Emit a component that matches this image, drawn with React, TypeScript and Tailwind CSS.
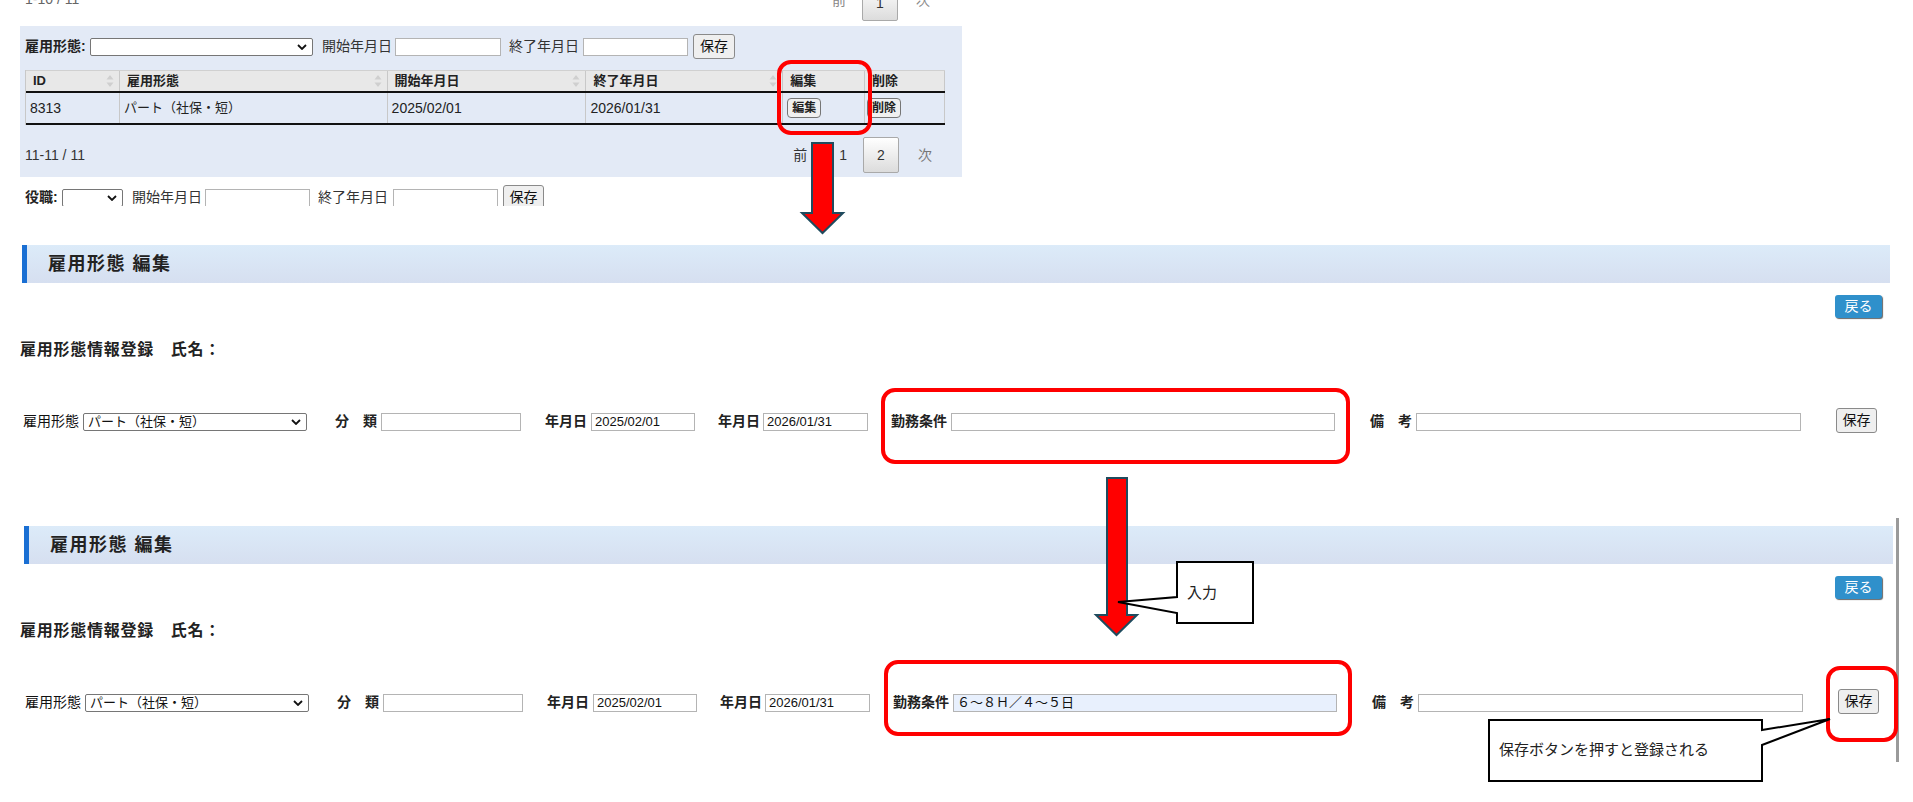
import React from 'react';

const FONT = "font-['Liberation_Sans','Noto_Sans_CJK_JP',sans-serif]";

function Chevron() {
  return (
    <svg width="10" height="6" viewBox="0 0 10 6" className="shrink-0">
      <path d="M1 1l4 4 4-4" fill="none" stroke="#111" strokeWidth="1.8" />
    </svg>
  );
}

function SortIcon() {
  return (
    <svg width="8" height="14" viewBox="0 0 8 14" className="shrink-0">
      <path d="M4 1 L7.5 5.5 H0.5 Z" fill="#cfcfcf" />
      <path d="M4 13 L7.5 8.5 H0.5 Z" fill="#cfcfcf" />
    </svg>
  );
}

function SelectBox({ value = '', className = '' }: { value?: string; className?: string }) {
  return (
    <div
      className={`flex h-[18px] shrink-0 items-center justify-between rounded-[2px] border border-[#767676] bg-white pl-[4px] pr-[5px] text-[13px] leading-none text-[#111] ${className}`}
    >
      <span className="whitespace-nowrap">{value}</span>
      <Chevron />
    </div>
  );
}

function TextBox({ value = '', className = '' }: { value?: string; className?: string }) {
  return (
    <input
      readOnly
      value={value}
      className={`h-[18px] shrink-0 border border-[#b4b4b4] px-[3px] text-[13px] text-[#111] outline-none ${className}`}
    />
  );
}

function GrayButton({ label, className = '' }: { label: string; className?: string }) {
  return (
    <button
      className={`h-[25px] shrink-0 rounded-[3px] border border-[#8a8a8a] bg-[#efefef] text-[14px] text-[#111] ${className}`}
    >
      {label}
    </button>
  );
}

function HeadCell({ label, className, sort }: { label: string; className: string; sort?: boolean }) {
  return (
    <div className={`flex h-full items-center justify-between border-r border-[#c8c8c8] pl-[7px] pr-[5px] ${className}`}>
      <span>{label}</span>
      {sort && <SortIcon />}
    </div>
  );
}

function Pager({ before, active, after }: { before: string; active: string; after: string }) {
  return (
    <div className="ml-auto flex items-center text-[14px] text-[#333]">
      <span>{before}</span>
      <span className="ml-[32px]">{after}</span>
      <button className="ml-[16px] h-[36px] w-[36px] rounded-[2px] border border-[#a9a9a9] bg-linear-to-b from-white to-[#dcdcdc] text-[14px] text-[#333]">
        {active}
      </button>
      <span className="ml-[19px] text-[#777]">次</span>
    </div>
  );
}

function EditSection({
  bandClass,
  formClass,
  work = '',
  workClass = 'bg-white',
}: {
  bandClass: string;
  formClass: string;
  work?: string;
  workClass?: string;
}) {
  return (
    <section>
      <div
        className={`flex h-[38px] items-center border-l-[5px] border-[#1a6fd3] bg-linear-to-b from-[#dcebf9] to-[#d6dff0] pl-[21px] ${bandClass}`}
      >
        <h2 className="text-[18px] font-bold tracking-[1.5px] text-[#222]">雇用形態 編集</h2>
      </div>

      <div className="mt-[12px] flex w-[1882px] justify-end">
        <button className="h-[23px] w-[47px] rounded-[3px] bg-[#2f90cb] text-[14px] text-white shadow-[1px_1px_1px_rgba(0,0,0,0.6)]">
          戻る
        </button>
      </div>

      <div className="ml-[20px] mt-[20px] h-[24px] text-[16px] font-bold leading-[24px] tracking-[0.75px] text-[#222]">
        雇用形態情報登録　氏名：
      </div>

      <div className={`mt-[46px] flex h-[25px] items-end text-[14px] text-[#222] ${formClass}`}>
        <div className="mb-[1px] flex items-center">
          <span className="w-[56px] whitespace-nowrap text-[#111]">雇用形態</span>
          <SelectBox value="パート（社保・短）" className="ml-[4px] w-[224px]" />
        </div>
        <div className="mb-[1px] ml-[28px] flex items-center">
          <span className="w-[42px] whitespace-nowrap font-bold">分　類</span>
          <TextBox className="ml-[4px] w-[140px] bg-white" />
        </div>
        <div className="mb-[1px] ml-[24px] flex items-center">
          <span className="w-[42px] whitespace-nowrap font-bold">年月日</span>
          <TextBox value="2025/02/01" className="ml-[4px] w-[104px] bg-white" />
        </div>
        <div className="mb-[1px] ml-[23px] flex items-center">
          <span className="w-[42px] whitespace-nowrap font-bold">年月日</span>
          <TextBox value="2026/01/31" className="ml-[3px] w-[105px] bg-white" />
        </div>
        <div className="mb-[1px] ml-[23px] flex items-center">
          <span className="w-[56px] whitespace-nowrap font-bold">勤務条件</span>
          <TextBox value={work} className={`ml-[4px] w-[384px] ${workClass}`} />
        </div>
        <div className="mb-[1px] ml-[35px] flex items-center">
          <span className="w-[42px] whitespace-nowrap font-bold">備　考</span>
          <TextBox className="ml-[4px] w-[385px] bg-white" />
        </div>
        <GrayButton label="保存" className="ml-[35px] w-[41px]" />
      </div>
    </section>
  );
}

function Annotations() {
  const red = { fill: 'none', stroke: '#ff0000', strokeWidth: 4 };
  const arrow = { fill: '#ff0000', stroke: '#1f4b5e', strokeWidth: 2 };
  return (
    <>
      <svg className="pointer-events-none absolute left-0 top-0" width="1913" height="802" viewBox="0 0 1913 802">
        <rect x="1896" y="518" width="3" height="244" fill="#9a9a9a" />
        <rect x="779" y="62" width="91" height="71" rx="12" {...red} />
        <polygon points="812,143 833,143 833,213 843,213 822.5,233 802,213 812,213" {...arrow} />
        <rect x="883" y="390" width="465" height="72" rx="12" {...red} />
        <polygon points="1107,478 1127,478 1127,615 1137,615 1116.5,635 1096,615 1107,615" {...arrow} />
        <path d="M1177,597 L1177,562 L1253,562 L1253,623 L1177,623 L1177,613 L1118,602 Z" fill="#fff" stroke="#000" strokeWidth="2" />
        <rect x="886" y="662" width="464" height="72" rx="12" {...red} />
        <rect x="1828" y="668" width="68" height="72" rx="12" {...red} />
        <path d="M1762,730 L1830,719 L1762,745 L1762,781 L1489,781 L1489,720 L1762,720 Z" fill="#fff" stroke="#000" strokeWidth="2" />
      </svg>
      <div className="pointer-events-none absolute left-[1187px] top-[582px] text-[15px] leading-[22px] text-[#222]">入力</div>
      <div className="pointer-events-none absolute left-[1499px] top-[739px] whitespace-nowrap text-[15px] leading-[22px] text-[#222]">
        保存ボタンを押すと登録される
      </div>
    </>
  );
}

export default function App() {
  return (
    <div className={`relative h-[802px] w-[1913px] overflow-hidden bg-white ${FONT}`}>
      {/* bottom edge of the previous pager, cut off by the screenshot */}
      <div className="h-[26px] overflow-hidden">
        <div className="mt-[-15px] flex h-[36px] w-[962px] items-center pl-[25px] pr-[32px] text-[14px] text-[#666]">
          <span className="mb-[8px]">1-10 / 11</span>
          <div className="ml-auto flex items-center text-[14px] text-[#888]">
            <span className="mb-[6px]">前</span>
            <button className="ml-[16px] h-[36px] w-[36px] rounded-[2px] border border-[#a9a9a9] bg-linear-to-b from-white to-[#dcdcdc] text-[#333]">
              1
            </button>
            <span className="mb-[6px] ml-[18px]">次</span>
          </div>
        </div>
      </div>

      {/* list panel */}
      <div className="ml-[20px] flex h-[151px] w-[942px] flex-col bg-[#e3eaf6] pl-[5px] pt-[8px]">
        <div className="flex h-[25px] items-center text-[14px] text-[#333]">
          <span className="w-[60px] whitespace-nowrap font-bold text-[#222]">雇用形態:</span>
          <SelectBox className="ml-[5px] w-[223px]" />
          <span className="ml-[9px] w-[68px] whitespace-nowrap">開始年月日</span>
          <TextBox className="ml-[5px] w-[106px] bg-white" />
          <span className="ml-[8px] w-[68px] whitespace-nowrap">終了年月日</span>
          <TextBox className="ml-[6px] w-[105px] bg-white" />
          <GrayButton label="保存" className="ml-[5px] w-[42px]" />
        </div>

        <div className="mt-[11px] w-[920px] border-l border-[#c8c8c8] text-[#222]">
          <div className="flex h-[23px] border-b-2 border-t border-b-[#111] border-t-[#d0d0d0] bg-[#e8e8e8] text-[13px] font-bold">
            <HeadCell label="ID" className="w-[94px]" sort />
            <HeadCell label="雇用形態" className="w-[268px]" sort />
            <HeadCell label="開始年月日" className="w-[199px]" sort />
            <HeadCell label="終了年月日" className="w-[197px]" sort />
            <HeadCell label="編集" className="w-[82px]" />
            <HeadCell label="削除" className="w-[80px]" />
          </div>
          <div className="flex h-[32px] border-b-2 border-[#111] text-[14px]">
            <div className="flex w-[94px] items-center border-r border-[#c8c8c8] pl-[4px]">8313</div>
            <div className="flex w-[268px] items-center border-r border-[#c8c8c8] pl-[4px] text-[13px]">パート（社保・短）</div>
            <div className="flex w-[199px] items-center border-r border-[#c8c8c8] pl-[4px]">2025/02/01</div>
            <div className="flex w-[197px] items-center border-r border-[#c8c8c8] pl-[4px]">2026/01/31</div>
            <div className="flex w-[82px] items-center border-r border-[#c8c8c8] pl-[4px]">
              <button className="h-[20px] w-[34px] rounded-[4px] border border-[#767676] bg-[#f0f0f0] text-[12px] font-bold">編集</button>
            </div>
            <div className="flex w-[80px] items-center border-r border-[#c8c8c8] pl-[2px]">
              <button className="h-[20px] w-[34px] rounded-[4px] border border-[#767676] bg-[#f0f0f0] text-[12px] font-bold">削除</button>
            </div>
          </div>
        </div>

        <div className="mt-[12px] flex h-[36px] items-center pr-[30px] text-[14px] text-[#333]">
          <span>11-11 / 11</span>
          <Pager before="前" after="1" active="2" />
        </div>
      </div>

      {/* next filter row, cut off by the screenshot */}
      <div className="h-[29px] overflow-hidden pl-[25px] pt-[8px]">
        <div className="flex h-[25px] items-center text-[14px] text-[#333]">
          <span className="w-[33px] whitespace-nowrap font-bold text-[#222]">役職:</span>
          <SelectBox className="ml-[4px] w-[61px]" />
          <span className="ml-[9px] w-[68px] whitespace-nowrap">開始年月日</span>
          <TextBox className="ml-[5px] w-[105px] bg-white" />
          <span className="ml-[8px] w-[70px] whitespace-nowrap">終了年月日</span>
          <TextBox className="ml-[5px] w-[105px] bg-white" />
          <GrayButton label="保存" className="ml-[5px] w-[41px]" />
        </div>
      </div>

      <div className="mt-[39px]">
        <EditSection bandClass="ml-[22px] w-[1868px]" formClass="ml-[23px]" />
      </div>

      <div className="mt-[93px]">
        <EditSection
          bandClass="ml-[24px] w-[1869px]"
          formClass="ml-[25px]"
          work="６～８Ｈ／４～５日"
          workClass="bg-[#e8f0fd]"
        />
      </div>

      <Annotations />
    </div>
  );
}
